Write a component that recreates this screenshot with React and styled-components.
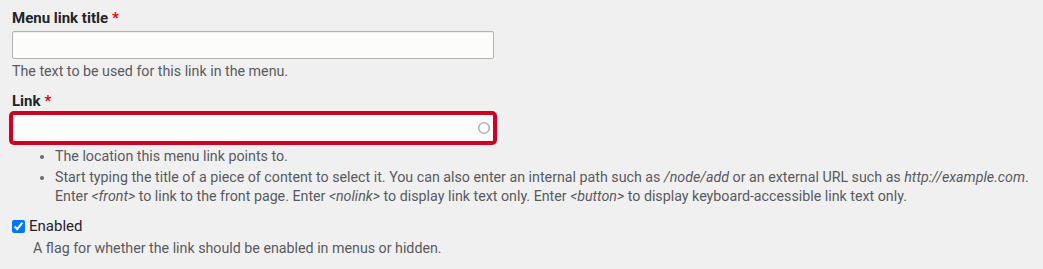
import React from "react";
import styled, { createGlobalStyle } from "styled-components";

const GlobalStyle = createGlobalStyle`
  html, body {
    margin: 0;
    padding: 0;
    background: #f0f0f0;
  }
  body {
    font-family: Roboto, "Liberation Sans", sans-serif;
    color: #232429;
  }
`;

const Form = styled.div`
  padding: 8px 10px 12px 12px;
`;

const FormItem = styled.div`
  margin-bottom: ${props => props.gap || 0}px;
`;

const Label = styled.label`
  display: block;
  font-size: 15px;
  font-weight: 700;
  line-height: 20px;
  color: #232429;
  margin-bottom: 3px;
`;

const Required = styled.span`
  color: #e00;
  margin-left: 4px;
  font-weight: 700;
`;

const InputWrap = styled.div`
  position: relative;
  width: 482px;
`;

const TextInput = styled.input`
  display: block;
  box-sizing: border-box;
  width: 100%;
  height: 28px;
  margin: 0;
  padding: 4px 8px;
  background: #fcfcfa;
  border: 1px solid ${props => (props.error ? "#cf0022" : "#b4b4b4")};
  border-radius: 2px;
  box-shadow: ${props => (props.error ? "0 0 0 3px #cf0022" : "inset 0 1px 1px rgba(0,0,0,0.06)")};
  font-family: inherit;
  font-size: 14px;
  outline: none;
`;

const Throbber = styled.svg`
  position: absolute;
  right: 3px;
  top: 7px;
`;

const Description = styled.div`
  font-size: 14.24px;
  line-height: 19px;
  color: #595a5f;
  margin-top: 3px;
  padding-left: ${props => props.indent || 0}px;
`;

const List = styled.ul`
  margin: 4.5px 0 0 0;
  padding-left: 43px;
  font-size: 14.24px;
  line-height: 19px;
  color: #595a5f;
`;

const ListItem = styled.li`
  margin-bottom: 2.5px;
  &::marker {
    color: #6b6b6b;
  }
`;

const CheckRow = styled.label`
  display: flex;
  align-items: center;
  gap: 4px;
  font-size: 15px;
  line-height: 20px;
  color: #232429;
`;

const Checkbox = styled.input`
  width: 13px;
  height: 13px;
  margin: 0;
`;

export default function App() {
  return (
    <>
      <GlobalStyle />
      <Form>
        <FormItem gap={10}>
          <Label>
            Menu link title<Required>*</Required>
          </Label>
          <InputWrap>
            <TextInput type="text" />
          </InputWrap>
          <Description>The text to be used for this link in the menu.</Description>
        </FormItem>

        <FormItem gap={10}>
          <Label>
            Link<Required>*</Required>
          </Label>
          <InputWrap>
            <TextInput type="text" error />
            <Throbber width="14" height="14" viewBox="0 0 14 14">
              <circle cx="7" cy="7" r="5.3" fill="none" stroke="#b3b3b3" strokeWidth="1.6" />
            </Throbber>
          </InputWrap>
          <List>
            <ListItem>The location this menu link points to.</ListItem>
            <ListItem>
              Start typing the title of a piece of content to select it. You can also enter an
              internal path such as <em>/node/add</em> or an external URL such as{" "}
              <em>http://example.com</em>. Enter <em>&lt;front&gt;</em> to link to the front page.
              Enter <em>&lt;nolink&gt;</em> to display link text only. Enter{" "}
              <em>&lt;button&gt;</em> to display keyboard-accessible link text only.
            </ListItem>
          </List>
        </FormItem>

        <FormItem>
          <CheckRow>
            <Checkbox type="checkbox" defaultChecked />
            Enabled
          </CheckRow>
          <Description indent={21}>
            A flag for whether the link should be enabled in menus or hidden.
          </Description>
        </FormItem>
      </Form>
    </>
  );
}
